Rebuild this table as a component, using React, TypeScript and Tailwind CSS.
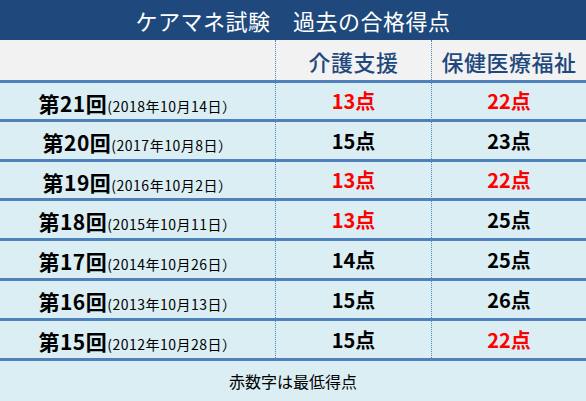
import React from 'react';

const rows = [
  { no: '第21回', date: '(2018年10月14日）', kaigo: '13', kaigoRed: true, hoken: '22', hokenRed: true, h: 'h-[39px]' },
  { no: '第20回', date: '(2017年10月8日）', kaigo: '15', kaigoRed: false, hoken: '23', hokenRed: false, h: 'h-[40px]' },
  { no: '第19回', date: '(2016年10月2日）', kaigo: '13', kaigoRed: true, hoken: '22', hokenRed: true, h: 'h-[39px]' },
  { no: '第18回', date: '(2015年10月11日）', kaigo: '13', kaigoRed: true, hoken: '25', hokenRed: false, h: 'h-[40px]' },
  { no: '第17回', date: '(2014年10月26日）', kaigo: '14', kaigoRed: false, hoken: '25', hokenRed: false, h: 'h-[40px]' },
  { no: '第16回', date: '(2013年10月13日）', kaigo: '15', kaigoRed: false, hoken: '26', hokenRed: false, h: 'h-[40px]' },
  { no: '第15回', date: '(2012年10月28日）', kaigo: '15', kaigoRed: false, hoken: '22', hokenRed: true, h: 'h-[40px]' },
];

const App = () => {
  return (
    <div
      className="w-[586px] h-[401px] bg-[#DAEEF3] overflow-hidden"
      style={{ fontFamily: '"Noto Sans CJK JP", "Noto Sans", sans-serif' }}
    >
      <div className="h-10 bg-[#1F497D] flex items-center justify-center text-white text-[22px] tracking-[0.5px] leading-none">
        ケアマネ試験　過去の合格得点
      </div>

      <div className="grid grid-cols-[275px_156px_155px] h-[43px] bg-[#F2F2F2] border-b-[3px] border-[#4F81BD]">
        <div></div>
        <div className="flex items-center justify-center pt-[2px] border-l border-dotted border-[#4F81BD] text-[22px] tracking-[0.5px] font-medium text-[#1F497D]">
          介護支援
        </div>
        <div className="flex items-center justify-center pt-[2px] border-l border-dotted border-[#4F81BD] text-[22px] tracking-[0.5px] font-medium text-[#1F497D]">
          保健医療福祉
        </div>
      </div>

      {rows.map((r) => (
        <div key={r.no} className={`grid grid-cols-[275px_156px_155px] ${r.h} border-b-[3px] border-[#4F81BD]`}>
          <div className="flex items-baseline justify-center pt-[5px] text-black">
            <span className="text-[21px] tracking-[0.5px] font-bold">{r.no}</span>
            <span className="text-[14px] tracking-[0.5px]">{r.date}</span>
          </div>
          <div
            className={`flex items-center justify-center border-l border-dotted border-[#4F81BD] text-[20px] font-bold ${r.kaigoRed ? 'text-[#FF0000]' : 'text-black'}`}
          >
            {r.kaigo}点
          </div>
          <div
            className={`flex items-center justify-center border-l border-dotted border-[#4F81BD] text-[20px] font-bold ${r.hokenRed ? 'text-[#FF0000]' : 'text-black'}`}
          >
            {r.hoken}点
          </div>
        </div>
      ))}

      <div className="h-10 flex items-center justify-center text-[16px] text-black">
        赤数字は最低得点
      </div>
    </div>
  );
};

export default App;
